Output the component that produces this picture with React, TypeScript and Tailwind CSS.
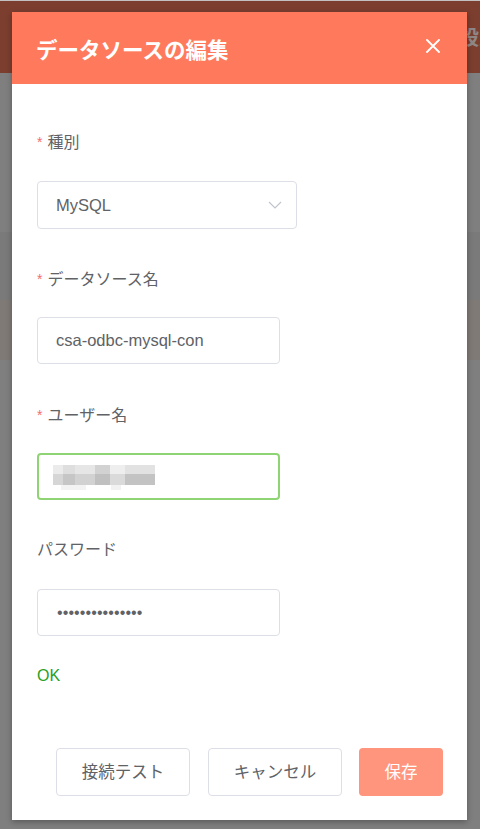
import React from "react";

const FONT = '"Liberation Sans", "Noto Sans CJK JP", sans-serif';

function Label({ text, required = true }: { text: string; required?: boolean }) {
  return (
    <div className="flex h-[22px] items-center text-[16px] leading-[22px] text-[#606266]">
      {required && <span className="mr-[5px] mt-[-2px] text-[14px] text-[#f56c6c]">*</span>}
      <span>{text}</span>
    </div>
  );
}

function Blurred() {
  const top = [
    ["w-[10px]", "bg-[#ebebeb]"],
    ["w-[12px]", "bg-[#dedede]"],
    ["w-[20px]", "bg-[#e6e6e6]"],
    ["w-[15px]", "bg-[#d2d2d2]"],
    ["w-[15px]", "bg-[#eeeeee]"],
    ["w-[30px]", "bg-[#e2e2e2]"],
  ];
  const bottom = [
    ["w-[10px]", "bg-[#d6d6d6]"],
    ["w-[12px]", "bg-[#c6c6c6]"],
    ["w-[20px]", "bg-[#d2d2d2]"],
    ["w-[15px]", "bg-[#c0c0c0]"],
    ["w-[15px]", "bg-[#dadada]"],
    ["w-[30px]", "bg-[#c3c3c3]"],
  ];
  return (
    <div className="flex flex-col blur-[0.6px]">
      <div className="flex h-[9px]">
        {top.map(([w, c], i) => (
          <div key={i} className={`${w} ${c}`} />
        ))}
      </div>
      <div className="flex h-[11px]">
        {bottom.map(([w, c], i) => (
          <div key={i} className={`${w} ${c}`} />
        ))}
      </div>
      <div className="flex h-[5px]">
        <div className="w-[8px]" />
        <div className="w-[25px] bg-[#f3f3f3]" />
        <div className="w-[25px]" />
        <div className="w-[10px] bg-[#f2f2f2]" />
      </div>
    </div>
  );
}

export default function App() {
  return (
    <div className="relative h-[829px] w-[480px] overflow-hidden bg-[#7f7f7f]" style={{ fontFamily: FONT }}>
      {/* background page under overlay */}
      <div className="flex flex-col">
        <div className="h-[1px] bg-[#c2c2c2]" />
        <div className="relative h-[72px] bg-[#7c3e2f]">
          <span className="absolute left-[459px] top-[26px] whitespace-nowrap text-[20px] font-bold leading-[22px] text-[#8f8785]">
            設定
          </span>
        </div>
        <div className="h-[159px] bg-[#7f7f7f]" />
        <div className="h-[68px] bg-[#7a7a7a]" />
        <div className="h-[60px] bg-[#807a76]" />
        <div className="flex-1 bg-[#7f7f7f]" />
      </div>

      {/* modal */}
      <div className="absolute left-[12px] top-[12px] flex h-[808px] w-[455px] flex-col bg-white shadow-[0_2px_6px_rgba(0,0,0,0.3)]">
        <div className="flex h-[72px] items-center justify-between bg-[#ff7a5c] pl-[24px] pr-[27px] pt-[6px]">
          <span className="text-[21.5px] font-bold leading-[28px] text-white">データソースの編集</span>
          <svg width="14" height="14" viewBox="0 0 14 14" className="mt-[-10px]">
            <path d="M1 1 L13 13 M13 1 L1 13" stroke="white" strokeWidth="1.8" strokeLinecap="round" />
          </svg>
        </div>

        <div className="flex flex-1 flex-col px-[25px] pt-[48px]">
          {/* 種別 */}
          <Label text="種別" />
          <div className="mt-[27px] flex h-[48px] w-[260px] items-center justify-between rounded-[4px] border border-[#dcdfe6] pl-[18px] pr-[14px]">
            <span className="text-[16.5px] text-[#606266]">MySQL</span>
            <svg width="14" height="8" viewBox="0 0 14 8">
              <path d="M1 1 L7 7 L13 1" stroke="#c0c4cc" strokeWidth="1.2" fill="none" />
            </svg>
          </div>

          {/* データソース名 */}
          <div className="mt-[40px]">
            <Label text="データソース名" />
          </div>
          <div className="mt-[26px] flex h-[47px] w-[243px] items-center rounded-[4px] border border-[#dcdfe6] pl-[18px]">
            <span className="text-[16.5px] text-[#606266]">csa-odbc-mysql-con</span>
          </div>

          {/* ユーザー名 */}
          <div className="mt-[41px]">
            <Label text="ユーザー名" />
          </div>
          <div className="mt-[26px] flex h-[47px] w-[243px] items-center rounded-[4px] border-2 border-[#8fd474] pl-[14px] pt-[2px]">
            <Blurred />
          </div>

          {/* パスワード */}
          <div className="mt-[39px]">
            <Label text="パスワード" required={false} />
          </div>
          <div className="mt-[28px] flex h-[47px] w-[243px] items-center rounded-[4px] border border-[#dcdfe6] pl-[19px]">
            <span className="text-[16px] tracking-[0.1px] text-[#606266]">•••••••••••••••</span>
          </div>

          <div className="mt-[31px] text-[16px] leading-[18px] text-[#26a026]">OK</div>

          <div className="mr-[-1px] mt-[63px] flex justify-end">
            <button className="h-[48px] w-[134px] rounded-[4px] border border-[#dcdfe6] bg-white text-[16.5px] text-[#606266]">
              接続テスト
            </button>
            <button className="ml-[18px] h-[48px] w-[134px] rounded-[4px] border border-[#dcdfe6] bg-white text-[16.5px] text-[#606266]">
              キャンセル
            </button>
            <button className="ml-[17px] h-[48px] w-[84px] rounded-[4px] bg-[#ff957d] text-[16.5px] text-white">保存</button>
          </div>
        </div>
      </div>
    </div>
  );
}
